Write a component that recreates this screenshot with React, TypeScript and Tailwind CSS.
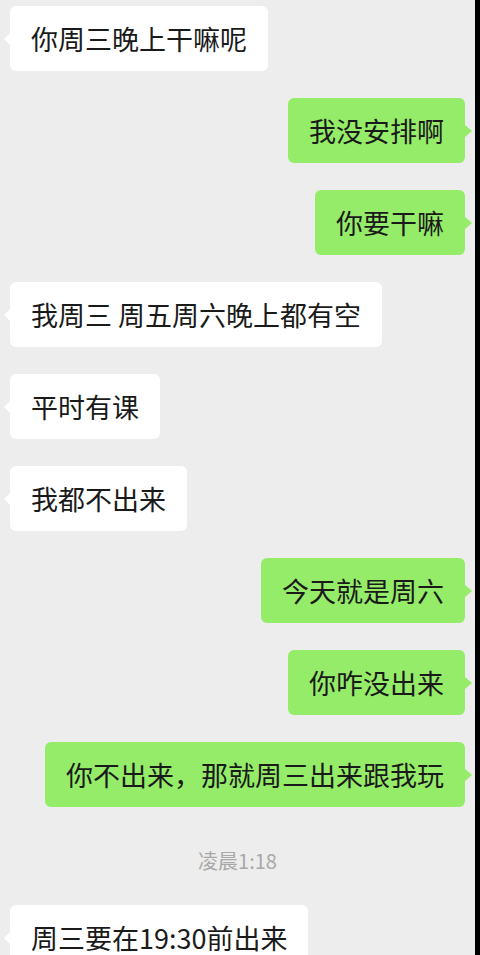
import React from "react";

type Msg = { side: "l" | "r"; text: string };

const msgs: Msg[] = [
  { side: "l", text: "你周三晚上干嘛呢" },
  { side: "r", text: "我没安排啊" },
  { side: "r", text: "你要干嘛" },
  { side: "l", text: "我周三 周五周六晚上都有空" },
  { side: "l", text: "平时有课" },
  { side: "l", text: "我都不出来" },
  { side: "r", text: "今天就是周六" },
  { side: "r", text: "你咋没出来" },
  { side: "r", text: "你不出来，那就周三出来跟我玩" },
];

const font = { fontFamily: '"Noto Sans CJK SC", "Noto Sans", sans-serif' };

function Bubble({ side, text }: Msg) {
  const isL = side === "l";
  return (
    <div className={isL ? "flex justify-start" : "flex justify-end"}>
      <div
        className={
          isL
            ? "relative rounded-[6px] bg-white px-[21px] py-[14px] text-[27px] leading-[37px] text-[#1a1a1a] whitespace-pre"
            : "relative rounded-[6px] bg-[#95ec69] px-[21px] py-[14px] text-[27px] leading-[37px] text-[#1a1a1a] whitespace-pre"
        }
      >
        {text}
        {isL ? (
          <span className="absolute left-[-6px] top-1/2 -translate-y-1/2 h-0 w-0 border-y-[6px] border-y-transparent border-r-[6px] border-r-white" />
        ) : (
          <span className="absolute right-[-7px] top-1/2 -translate-y-1/2 h-0 w-0 border-y-[6px] border-y-transparent border-l-[7px] border-l-[#95ec69]" />
        )}
      </div>
    </div>
  );
}

export default function App() {
  return (
    <div className="flex h-[955px] w-[480px] overflow-hidden bg-black" style={font}>
      <div className="flex w-[475px] flex-col bg-[#ededed] pl-[10px] pr-[10px] pt-[6px]">
        <div className="flex flex-col gap-[27px]">
          {msgs.map((m, i) => (
            <Bubble key={i} {...m} />
          ))}
        </div>
        <div className="mt-[41px] text-center text-[20px] leading-[26px] text-[#a8a8a8]">凌晨1:18</div>
        <div className="mt-[31px]">
          <Bubble side="l" text="周三要在19:30前出来" />
        </div>
      </div>
    </div>
  );
}
